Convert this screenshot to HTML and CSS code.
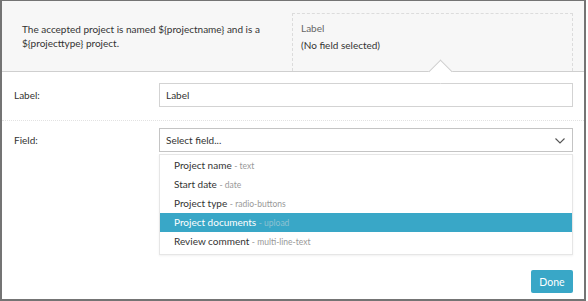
FILE: index.html
```html
<!DOCTYPE html>
<html lang="en">
<head>
  <meta charset="UTF-8">
  <title>Field placeholder</title>
  <link rel="stylesheet" href="styles.css">
</head>
<body>
  <div class="dialog">
    <!-- Template preview -->
    <div class="dialog-head">
      <p class="template-text">The accepted project is named ${projectname} and is a ${projecttype} project.</p>
      <div class="placeholder-box">
        <div class="placeholder-label">Label</div>
        <div class="placeholder-value">(No field selected)</div>
      </div>
    </div>

    <div class="dialog-body">
      <div class="form-row form-row-first">
        <label class="form-label">Label:</label>
        <div class="form-control">
          <input class="text-input" type="text" value="Label">
        </div>
      </div>

      <div class="form-row">
        <label class="form-label">Field:</label>
        <div class="form-control">
          <div class="select-box">
            <span>Select field...</span>
            <svg class="chevron" width="10" height="6" viewBox="0 0 10 6">
              <path d="M0.5 0.5 L5 5 L9.5 0.5" fill="none" stroke="#555" stroke-width="1.1"/>
            </svg>
          </div>
          <ul class="field-list">
            <li>Project name <span class="field-type">- text</span></li>
            <li>Start date <span class="field-type">- date</span></li>
            <li>Project type <span class="field-type">- radio-buttons</span></li>
            <li class="active">Project documents <span class="field-type">- upload</span></li>
            <li>Review comment <span class="field-type">- multi-line-text</span></li>
          </ul>
        </div>
      </div>

      <div class="dialog-footer">
        <button class="done-button">Done</button>
      </div>
    </div>
  </div>
</body>
</html>
```

FILE: styles.css
```css
* {
  margin: 0;
  padding: 0;
  box-sizing: border-box;
}

body {
  font-family: Lato, 'Liberation Sans', sans-serif;
  font-size: 10px;
  color: #333;
  background: #fff;
}

.dialog {
  width: 586px;
  height: 301px;
  border: 2px solid #747474;
  border-top-width: 1px;
  background: #fff;
}

.dialog-head {
  position: relative;
  display: flex;
  height: 71px;
  background: #f7f7f7;
  border-bottom: 1px solid #cfcfcf;
}

.template-text {
  width: 266px;
  padding: 21px 0 0 20px;
  line-height: 14px;
}

.placeholder-box {
  width: 281px;
  margin: 12px 11px 0 auto;
  padding: 6px 8px 0;
  border: 1px dashed #dcdcdc;
  border-bottom: none;
  line-height: 17px;
}

.placeholder-label {
  color: #666;
}

/* little notch pointing at the placeholder */
.placeholder-box::after {
  content: '';
  position: absolute;
  left: 430px;
  bottom: -9px;
  width: 16px;
  height: 16px;
  background: #fff;
  border-top: 1px solid #cfcfcf;
  border-left: 1px solid #cfcfcf;
  transform: rotate(45deg);
}

.dialog-body {
  padding: 0 11px 0 12px;
}

.form-row {
  display: flex;
  padding-top: 7px;
}

.form-row-first {
  padding: 11px 0 13px;
  margin: 0 -11px 0 -12px;
  padding-left: 12px;
  padding-right: 11px;
  border-bottom: 1px dotted #e2e2e2;
}

.form-label {
  width: 145px;
  height: 24px;
  line-height: 24px;
}

.form-control {
  flex: 1;
}

.text-input {
  width: 100%;
  height: 24px;
  padding: 0 6px;
  border: 1px solid #d3d3d3;
  font-family: inherit;
  font-size: 10px;
  color: #333;
}

.select-box {
  display: flex;
  align-items: center;
  justify-content: space-between;
  height: 24px;
  padding: 0 7px 0 6px;
  border: 1px solid #c4c4c4;
}

.chevron {
  margin-top: 1px;
}

.field-list {
  list-style: none;
  margin-top: 2px;
  padding: 1px 0 3px;
  border: 1px solid #e6e6e6;
  box-shadow: 0 1px 2px rgba(0, 0, 0, 0.06);
}

.field-list li {
  height: 19px;
  line-height: 19px;
  padding-left: 14px;
}

.field-type {
  color: #999;
  font-size: 8.5px;
}

.field-list li.active {
  background: #39a7c7;
  color: #fff;
}

.field-list li.active .field-type {
  color: #8ec2d2;
}

.dialog-footer {
  display: flex;
  justify-content: flex-end;
  padding-top: 15px;
}

.done-button {
  width: 42px;
  height: 23px;
  border: none;
  border-radius: 2px;
  background: #39a7c7;
  color: #fff;
  font-family: inherit;
  font-size: 10.5px;
}
```
